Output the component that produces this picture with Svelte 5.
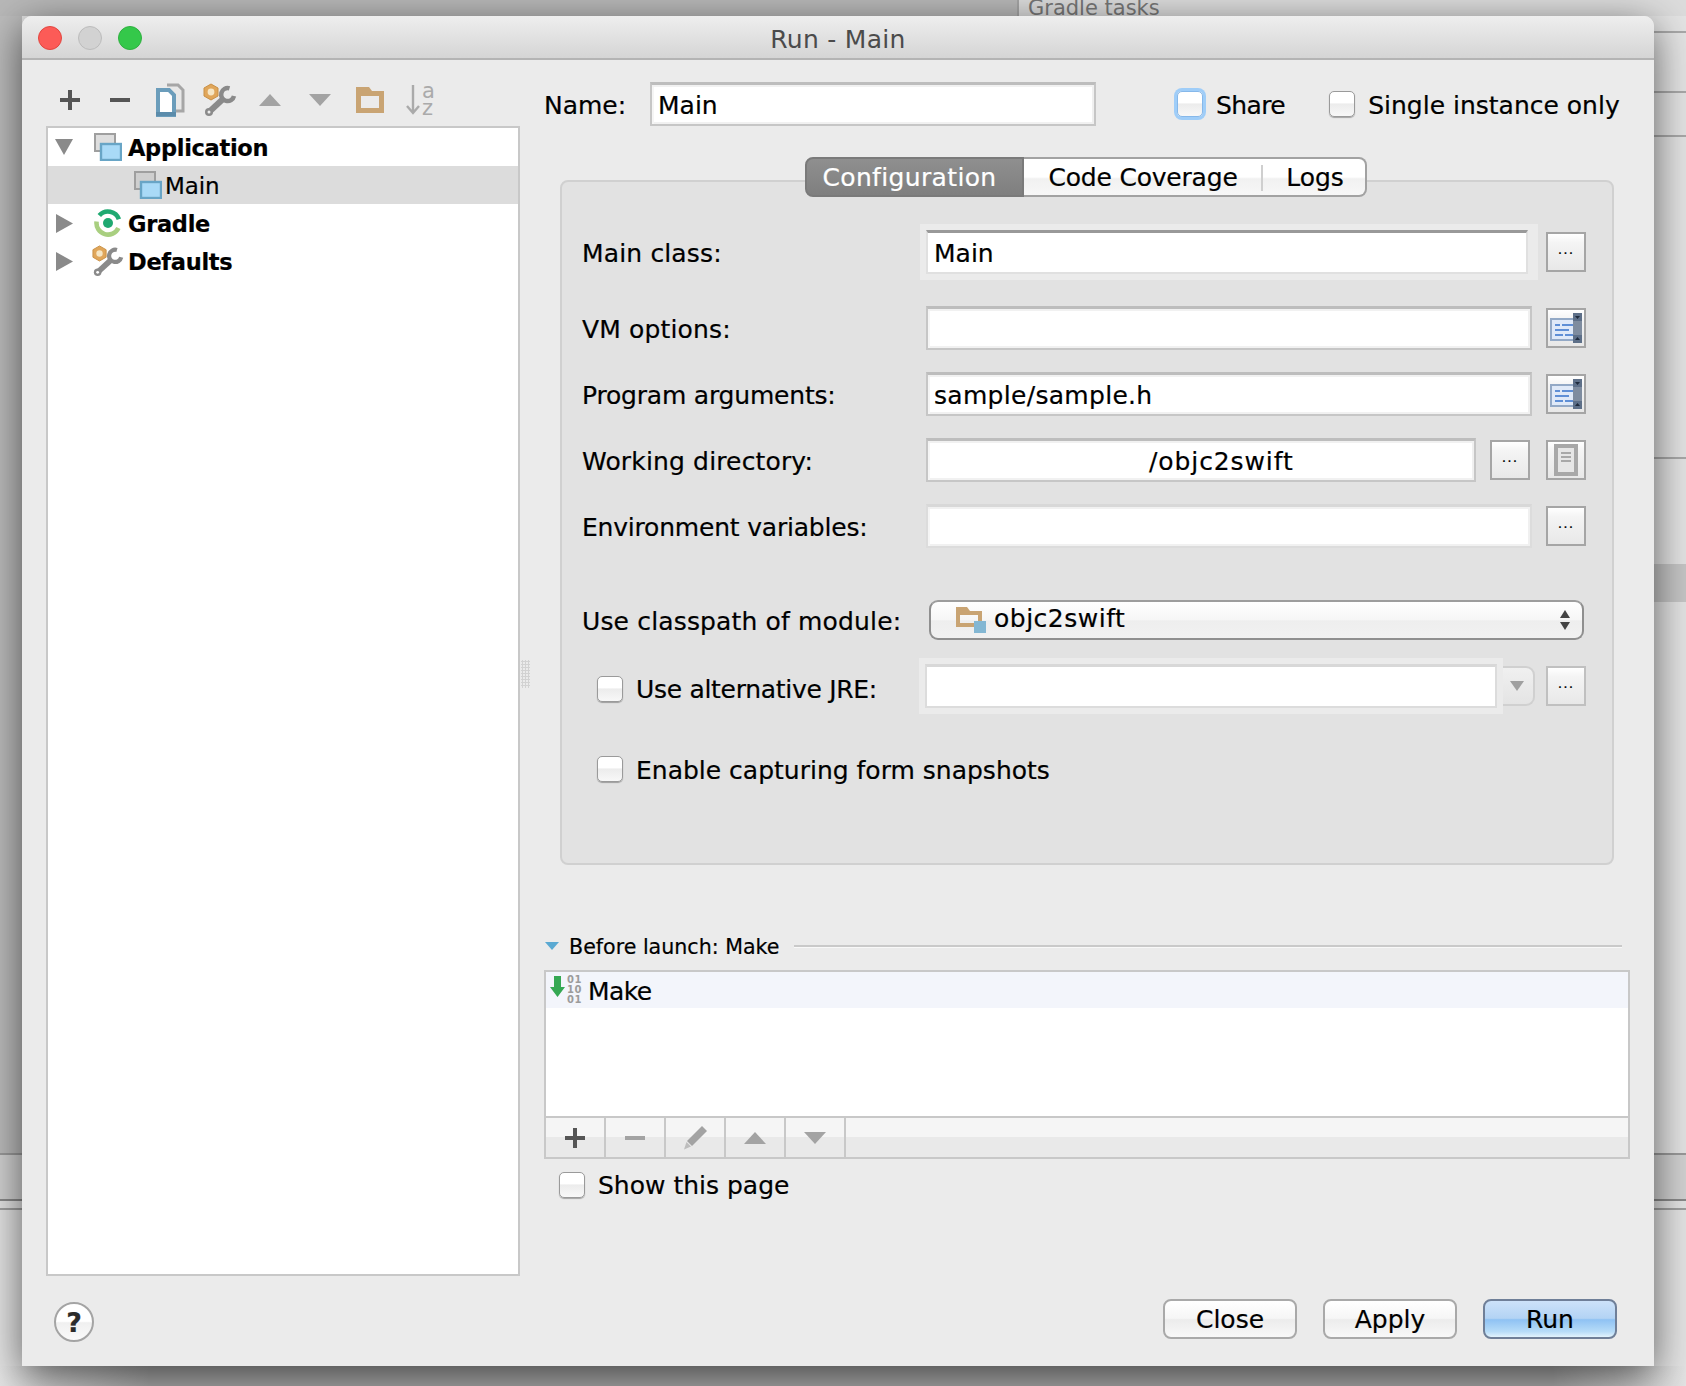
<script>
  const rows = [
    { label: 'VM options:', value: '', tight: false },
    { label: 'Program arguments:', value: 'sample/sample.h', tight: true }
  ];
  const listTools = ['plus', 'minus', 'pencil', 'up', 'down'];
</script>

<div class="desk">
  <div class="bg-top">
    <div class="bg-top-left"></div>
    <div class="bg-top-right"><span class="gradle-tasks">Gradle tasks</span></div>
  </div>

  <div class="window">
    <header class="titlebar">
      <div class="lights">
        <span class="light red"></span>
        <span class="light gray"></span>
        <span class="light green"></span>
      </div>
      <div class="title">Run - Main</div>
    </header>

    <div class="content">
      <aside class="left">
        <div class="toolbar">
          <span class="tool"><svg width="22" height="22" viewBox="0 0 22 22"><path d="M1 11h20M11 1v20" stroke="#555" stroke-width="4"/></svg></span>
          <span class="tool"><svg width="22" height="22" viewBox="0 0 22 22"><path d="M1 11h20" stroke="#555" stroke-width="4"/></svg></span>
          <span class="tool"><svg width="30" height="34" viewBox="0 0 30 34">
            <path d="M12 2h11l5 5v21h-8" fill="#e8e8e8" stroke="#a6a6a6" stroke-width="3"/>
            <path d="M3 7h11l5 5v20H3z" fill="#fff" stroke="#6b9dbb" stroke-width="4"/>
            <path d="M1 29h20v4H1z" fill="#5b8cab"/>
          </svg></span>
          <span class="tool"><svg width="34" height="34" viewBox="0 0 34 34">
            <path d="M8 1l7 4v8l-7 4-7-4V5z" fill="#e0a65a" stroke="#c99045" stroke-width="1"/>
            <circle cx="8" cy="9" r="3.400" fill="#f6e6c4"/>
            <path d="M26.500 5.300A6.500 6.500 0 1 0 31 13" fill="none" stroke="#8a8a8a" stroke-width="4.500"/>
            <path d="M20 16L6 29" stroke="#8a8a8a" stroke-width="6"/>
            <circle cx="6" cy="29" r="4" fill="#8a8a8a"/>
            <circle cx="6" cy="29" r="1.500" fill="#ececec"/>
          </svg></span>
          <span class="tool"><svg width="24" height="14" viewBox="0 0 24 14"><path d="M1 13L12 1l11 12z" fill="#a3a3a3"/></svg></span>
          <span class="tool"><svg width="24" height="14" viewBox="0 0 24 14"><path d="M1 1l11 12L23 1z" fill="#a3a3a3"/></svg></span>
          <span class="tool"><svg width="28" height="26" viewBox="0 0 28 26"><path d="M0 0h13l3 4h12v22H0zM5 9v12h18V9z" fill="#c9a473" fill-rule="evenodd"/></svg></span>
          <span class="tool"><svg class="sort" width="30" height="32" viewBox="0 0 30 32">
            <path d="M8 1v28M2 22l6 7 6-7" stroke="#aaa" stroke-width="2.400" fill="none"/>
            <text x="17" y="14" class="sort-letter">a</text>
            <text x="17" y="31" class="sort-letter">z</text>
          </svg></span>
        </div>

        <div class="tree">
          <div class="tree-row">
            <span class="twisty first"><svg width="18" height="16" viewBox="0 0 18 16"><path d="M0 0h18L9 16z" fill="#8a8a8a"/></svg></span>
            <svg class="appicon" width="28" height="28" viewBox="0 0 28 28">
              <rect x="1" y="1" width="20" height="17" fill="#dedede" stroke="#9f9f9f" stroke-width="2"/>
              <rect x="7" y="11" width="20" height="16" fill="#a9daf7" stroke="#68a5c6" stroke-width="2.400"/>
            </svg>
            <span class="tree-label strong">Application</span>
          </div>
          <div class="tree-row selected child">
            <svg class="appicon" width="28" height="28" viewBox="0 0 28 28">
              <rect x="1" y="1" width="20" height="17" fill="#cfcfcf" stroke="#9f9f9f" stroke-width="2"/>
              <rect x="7" y="11" width="20" height="16" fill="#a9daf7" stroke="#68a5c6" stroke-width="2.400"/>
            </svg>
            <span class="tree-label child-label">Main</span>
          </div>
          <div class="tree-row">
            <span class="twisty"><svg width="17" height="19" viewBox="0 0 17 19"><path d="M0 0l17 9.500-17 9.500z" fill="#8a8a8a"/></svg></span>
            <svg class="appicon" width="28" height="28" viewBox="0 0 28 28">
              <path d="M5.300 6.500A11.500 11.500 0 0 1 24.900 10.300" fill="none" stroke="#1fa971" stroke-width="4.600"/>
              <path d="M2.600 12.500A11.500 11.500 0 0 0 24.400 19" fill="none" stroke="#a9cf80" stroke-width="4.600"/>
              <circle cx="14" cy="14" r="5" fill="#1fa971"/>
            </svg>
            <span class="tree-label strong">Gradle</span>
          </div>
          <div class="tree-row">
            <span class="twisty"><svg width="17" height="19" viewBox="0 0 17 19"><path d="M0 0l17 9.500-17 9.500z" fill="#8a8a8a"/></svg></span>
            <svg class="appicon wrench" width="32" height="32" viewBox="0 0 34 34">
              <path d="M8 1l7 4v8l-7 4-7-4V5z" fill="#e0a65a" stroke="#c99045" stroke-width="1"/>
              <circle cx="8" cy="9" r="3.400" fill="#f6e6c4"/>
              <path d="M26.500 5.300A6.500 6.500 0 1 0 31 13" fill="none" stroke="#8a8a8a" stroke-width="4.500"/>
              <path d="M20 16L6 29" stroke="#8a8a8a" stroke-width="6"/>
              <circle cx="6" cy="29" r="4" fill="#8a8a8a"/>
              <circle cx="6" cy="29" r="1.500" fill="#fff"/>
            </svg>
            <span class="tree-label strong">Defaults</span>
          </div>
        </div>

        <div class="help-wrap"><span class="help">?</span></div>
      </aside>

      <div class="splitter"><span class="grip"></span></div>

      <main class="right">
        <div class="name-row">
          <span class="name-label">Name:</span>
          <div class="input name-input">Main</div>
          <span class="check focused share"></span>
          <span class="check-label share-label">Share</span>
          <span class="check single"></span>
          <span class="check-label">Single instance only</span>
        </div>

        <div class="tabs">
          <span class="tab active">Configuration</span>
          <span class="tab code">Code Coverage</span>
          <span class="tab logs">Logs</span>
        </div>

        <section class="panel">
          <div class="row main-row">
            <span class="lbl">Main class:</span>
            <div class="input focus-field">Main</div>
            <span class="btn-dots">...</span>
          </div>

          {#each rows as r}
            <div class="row">
              <span class="lbl" class:tight={r.tight}>{r.label}</span>
              <div class="input spaced">{r.value}</div>
              <span class="btn-dots">
                <svg width="34" height="34" viewBox="0 0 34 34">
                  <rect x="2" y="8" width="24" height="21" fill="#dfe9f8" stroke="#93a9c6" stroke-width="2"/>
                  <path d="M6 14h5M13 14h11M6 19h14M6 24h8M16 24h8" stroke="#5f8fd6" stroke-width="2"/>
                  <rect x="24" y="2" width="9" height="30" fill="#5d6f88"/>
                  <rect x="24" y="10" width="9" height="14" fill="#7e8c9f"/>
                  <path d="M26 5h5l-2.500 3zM26 29h5l-2.500-3z" fill="#1f2b3d"/>
                </svg>
              </span>
            </div>
          {/each}

          <div class="row">
            <span class="lbl">Working directory:</span>
            <div class="input wd">/objc2swift</div>
            <span class="btn-dots wd-btn">...</span>
            <span class="btn-dots">
              <svg width="24" height="32" viewBox="0 0 24 32">
                <rect x="2" y="2" width="20" height="28" fill="#e6e6e6" stroke="#a8a8a8" stroke-width="4"/>
                <path d="M7 9h10M7 13h10M7 17h10" stroke="#a8a8a8" stroke-width="2"/>
              </svg>
            </span>
          </div>

          <div class="row">
            <span class="lbl tight">Environment variables:</span>
            <div class="input soft"></div>
            <span class="btn-dots">...</span>
          </div>

          <div class="row select-row">
            <span class="lbl">Use classpath of module:</span>
            <div class="select">
              <svg width="30" height="26" viewBox="0 0 30 26">
                <path d="M0 0h11l3 4h12v16H0zM4 8v8h18V8z" fill="#c9a473" fill-rule="evenodd"/>
                <rect x="18" y="14" width="12" height="12" fill="#83b7d3"/>
              </svg>
              <span class="select-text">objc2swift</span>
              <svg class="updown" width="12" height="24" viewBox="0 0 12 24"><path d="M1 10L6 2l5 8zM1 14l5 8 5-8z" fill="#444"/></svg>
            </div>
          </div>

          <div class="row jre-row">
            <span class="check indent low"></span>
            <span class="lbl jre-label low">Use alternative JRE:</span>
            <div class="combo">
              <div class="input soft combo-input"></div>
              <span class="combo-arrow"><svg width="14" height="10" viewBox="0 0 14 10"><path d="M0 0h14L7 10z" fill="#a0a0a0"/></svg></span>
            </div>
            <span class="btn-dots light-btn">...</span>
          </div>

          <div class="row snap-row">
            <span class="check indent"></span>
            <span class="lbl snap-label">Enable capturing form snapshots</span>
          </div>
        </section>

        <div class="before">
          <svg width="14" height="8" viewBox="0 0 14 8"><path d="M0 0h14L7 8z" fill="#5aa9d2"/></svg>
          <span class="before-text">Before launch: Make</span>
          <span class="before-line"></span>
        </div>

        <div class="list">
          <div class="list-row">
            <svg width="34" height="30" viewBox="0 0 34 30">
              <path d="M4 1h7v11h4l-7.500 10-7.500-10h4z" fill="#35a853"/>
              <text x="17" y="8" class="bits">01</text>
              <text x="17" y="18" class="bits">10</text>
              <text x="17" y="28" class="bits">01</text>
            </svg>
            <span class="make">Make</span>
          </div>
          <div class="list-space"></div>
          <div class="list-tools">
            {#each listTools as t}
              <span class="list-tool">
                {#if t === 'plus'}
                  <svg width="22" height="22" viewBox="0 0 22 22"><path d="M1 11h20M11 1v20" stroke="#555" stroke-width="4"/></svg>
                {:else if t === 'minus'}
                  <svg width="22" height="22" viewBox="0 0 22 22"><path d="M1 11h20" stroke="#a3a3a3" stroke-width="4"/></svg>
                {:else if t === 'pencil'}
                  <svg width="26" height="26" viewBox="0 0 26 26"><path d="M20 1l5 5L10 21l-5-5z" fill="#a3a3a3"/><path d="M4.500 17l4.500 4.500-7 3z" fill="#bdbdbd"/></svg>
                {:else if t === 'up'}
                  <svg width="24" height="14" viewBox="0 0 24 14"><path d="M1 13L12 1l11 12z" fill="#a3a3a3"/></svg>
                {:else}
                  <svg width="24" height="14" viewBox="0 0 24 14"><path d="M1 1l11 12L23 1z" fill="#a3a3a3"/></svg>
                {/if}
              </span>
            {/each}
          </div>
        </div>

        <div class="show-row">
          <span class="check"></span>
          <span class="check-label show-label">Show this page</span>
        </div>

        <div class="actions">
          <span class="btn">Close</span>
          <span class="btn">Apply</span>
          <span class="btn primary">Run</span>
        </div>
      </main>
    </div>
  </div>
</div>

<style>
  :global(body) { margin: 0; background: #e4e4e4; }

  .desk {
    position: relative;
    width: 1686px;
    height: 1386px;
    overflow: hidden;
    font-family: "DejaVu Sans", "Liberation Sans", sans-serif;
    font-size: 25px;
    color: #000;
    -webkit-text-stroke: 0.2px currentColor;
    background:
      linear-gradient(90deg, #e4e4e4, #aaaaaa 9%, #aaaaaa 92%, #e4e4e4) 0 1366px / 100% 20px no-repeat,
      linear-gradient(#a9a9a9, #a9a9a9) 1654px 31px / 32px 2px no-repeat,
      linear-gradient(#a9a9a9, #a9a9a9) 1654px 91px / 32px 2px no-repeat,
      linear-gradient(#a9a9a9, #a9a9a9) 1654px 135px / 32px 2px no-repeat,
      linear-gradient(#a9a9a9, #a9a9a9) 1654px 457px / 32px 2px no-repeat,
      linear-gradient(#c6c6c6, #c6c6c6) 1654px 564px / 32px 38px no-repeat,
      linear-gradient(#9a9a9a, #9a9a9a) 0 1153px / 100% 2px no-repeat,
      linear-gradient(#8a8a8a, #8a8a8a) 0 1199px / 100% 2px no-repeat,
      linear-gradient(#a0a0a0, #a0a0a0) 0 1208px / 100% 2px no-repeat,
      linear-gradient(#d2d2d2, #d2d2d2) 0 1155px / 100% 44px no-repeat,
      linear-gradient(#bcbcbc, #bcbcbc) 0 0 / 22px 1153px no-repeat,
      #e4e4e4;
  }

  .bg-top { display: flex; height: 16px; }
  .bg-top-left { width: 1017px; background: #b8b8b8; border-right: 2px solid #a5a5a5; }
  .bg-top-right { flex: 1; background: #dcdcdc; padding-left: 9px; overflow: hidden; }
  .gradle-tasks { display: block; margin-top: -5px; font-size: 21px; line-height: 26px; color: #777; -webkit-text-stroke: 0; }

  .window {
    position: absolute;
    left: 22px;
    top: 16px;
    width: 1632px;
    height: 1350px;
    background: #ebebeb;
    border-radius: 10px 10px 0 0;
    box-shadow: 0 10px 40px rgba(0, 0, 0, 0.6);
    display: flex;
    flex-direction: column;
  }

  .titlebar {
    height: 42px;
    flex: none;
    display: flex;
    align-items: center;
    position: relative;
    background: linear-gradient(#eeeeee, #d5d5d5);
    border-bottom: 2px solid #b4b4b4;
    border-radius: 10px 10px 0 0;
  }
  .lights { display: flex; gap: 16px; padding-left: 16px; padding-top: 2px; }
  .light { width: 24px; height: 24px; border-radius: 50%; box-sizing: border-box; }
  .red { background: #fc5b57; border: 1px solid #e2463f; }
  .gray { background: #d2d2d2; border: 1px solid #bcbcbc; }
  .green { background: #34c84a; border: 1px solid #2eb03f; }
  .title {
    position: absolute;
    left: 0; right: 0;
    margin-top: 5px;
    text-align: center;
    font-size: 25px;
    letter-spacing: 0.3px;
    color: #4b4b4b;
    -webkit-text-stroke: 0;
  }

  .content { flex: 1; display: flex; min-height: 0; }

  .left {
    width: 499px;
    flex: none;
    display: flex;
    flex-direction: column;
    box-sizing: border-box;
    padding-left: 24px;
  }
  .toolbar {
    height: 66px;
    display: flex;
    align-items: center;
    flex: none;
    padding-top: 14px;
    box-sizing: border-box;
    margin-left: -1px;
  }
  .tool { width: 50px; display: flex; justify-content: center; flex: none; }
  .sort { overflow: visible; }
  .sort-letter { font-size: 21px; fill: #aaa; stroke: none; -webkit-text-stroke: 0; font-family: "DejaVu Sans", sans-serif; }

  .tree {
    width: 474px;
    height: 1150px;
    flex: none;
    box-sizing: border-box;
    border: 2px solid #c8c8c8;
    background: #fff;
  }
  .tree-row {
    height: 38px;
    display: flex;
    align-items: center;
    position: relative;
  }
  .tree-row.selected { background: #dcdcdc; }
  .twisty { width: 46px; display: flex; padding-left: 8px; box-sizing: border-box; flex: none; }
  .twisty.first { padding-left: 7px; }
  .child { padding-left: 86px; }
  .tree-label { margin: 2px 0 0 6px; }
  .child-label { margin-left: 3px; font-size: 23px; letter-spacing: -0.1px; }
  .strong { font-weight: 700; font-size: 22.5px; letter-spacing: -0.3px; }
  .wrench { margin-left: -2px; margin-right: -2px; }

  .help-wrap { padding: 26px 0 0 8px; }
  .help {
    display: flex;
    align-items: center;
    justify-content: center;
    width: 40px;
    height: 40px;
    box-sizing: border-box;
    border-radius: 50%;
    border: 2px solid #a4a4a4;
    background: linear-gradient(#ffffff 0 48%, #f0f0f0 52%, #fafafa);
    font-weight: 700;
    font-size: 27px;
    color: #2b2b2b;
  }

  .splitter {
    width: 24px;
    flex: none;
    padding-top: 600px;
    box-sizing: border-box;
  }
  .grip {
    display: block;
    width: 9px;
    height: 28px;
    background: radial-gradient(circle, #d2d2d2 1px, transparent 1.300px) 0 0 / 3px 3px;
  }

  .right { flex: 1; min-width: 0; display: flex; flex-direction: column; }

  .name-row {
    height: 44px;
    margin-top: 22px;
    display: flex;
    align-items: center;
    flex: none;
  }
  .name-label { width: 106px; margin: 2px 0 0 -1px; flex: none; }
  .name-input { width: 446px; flex: none; }
  .share { margin-left: 81px; }
  .single { margin-left: 44px; }
  .check-label { margin: 2px 0 0 13px; white-space: nowrap; }
  .share-label { letter-spacing: -0.6px; }

  .input {
    height: 44px;
    box-sizing: border-box;
    border: 2px solid #c6c6c6;
    border-top: 3px solid #bdbdbd;
    background: #fff;
    box-shadow: inset 0 2px 0 #f1f1f1, inset 2px 0 0 #f5f5f5, inset -2px 0 0 #f0f0f0, inset 0 -2px 0 #f1f1f1;
    padding: 0 6px;
    line-height: 41px;
    white-space: nowrap;
  }

  .check {
    width: 26px;
    height: 26px;
    flex: none;
    box-sizing: border-box;
    border: 1px solid #9a9a9a;
    border-radius: 5px;
    background: linear-gradient(#ffffff 0 45%, #ececec 50%, #f8f8f8);
    box-shadow: 0 1px 1px rgba(0,0,0,0.3);
  }
  .check.focused {
    box-shadow: 0 0 0 3px #9fcdf8;
    border-color: #86b8ea;
  }

  .tabs {
    display: flex;
    height: 40px;
    margin: 31px 0 -17px 260px;
    flex: none;
    position: relative;
    z-index: 1;
    width: 562px;
    box-sizing: border-box;
  }
  .tab {
    display: flex;
    align-items: center;
    justify-content: center;
    box-sizing: border-box;
    border: 2px solid #a2a2a2;
    border-left: none;
    background: linear-gradient(#ffffff 0 50%, #f1f1f1 55%, #f7f7f7);
  }
  .active {
    width: 219px;
    padding-right: 10px;
    color: #fff;
    letter-spacing: 0.35px;
    border: 2px solid #7a7a7a;
    border-radius: 8px 0 0 8px;
    background: linear-gradient(#8f8f8f, #7f7f7f);
  }
  .code { width: 238px; position: relative; letter-spacing: -0.2px; border-right: none; }
  .code::after {
    content: "";
    position: absolute;
    right: -1px;
    top: 6px;
    bottom: 4px;
    width: 2px;
    background: #cfcfcf;
  }
  .logs { flex: 1; border-radius: 0 8px 8px 0; padding-left: 3px; }

  .panel {
    margin-left: 15px;
    width: 1054px;
    height: 685px;
    flex: none;
    box-sizing: border-box;
    background: #e2e2e2;
    border: 2px solid #d0d0d0;
    border-radius: 8px;
    padding: 48px 26px 0 20px;
  }

  .row {
    height: 44px;
    display: flex;
    align-items: center;
    margin-top: 22px;
  }
  .main-row { margin-top: 0; margin-bottom: 32px; }
  .lbl { width: 344px; flex: none; white-space: nowrap; margin-top: 2px; letter-spacing: 0.15px; }
  .lbl.tight { letter-spacing: -0.2px; }
  .row .input { flex: 1; min-width: 0; }
  .spaced { letter-spacing: 0.3px; }
  .btn-dots {
    width: 40px;
    height: 40px;
    flex: none;
    margin-left: 14px;
    box-sizing: border-box;
    border: 2px solid #a5a5a5;
    background: linear-gradient(#ffffff, #f4f4f4 25%, #e8e8e8);
    display: flex;
    align-items: center;
    justify-content: center;
    font-size: 14px;
    letter-spacing: 1px;
    line-height: 1;
    padding-bottom: 6px;
    overflow: hidden;
  }
  .btn-dots svg { margin-bottom: -6px; }

  .focus-field {
    margin-right: 4px;
    border-color: #e0e0e0;
    border-top-color: #999;
    box-shadow: 0 0 0 6px #ebebeb, 4px 0 0 6px #ebebeb;
  }
  .wd { padding-left: 221px; letter-spacing: 0.9px; }
  .wd-btn { margin-right: 2px; }
  .soft {
    border-color: #dcdcdc;
    border-top-color: #d8d8d8;
  }

  .select-row { margin-top: 52px; height: 40px; }
  .select {
    flex: 1;
    height: 40px;
    margin: 0 2px 0 3px;
    box-sizing: border-box;
    border: 2px solid #8f8f8f;
    border-top-color: #9d9d9d;
    border-radius: 9px;
    background: linear-gradient(#ffffff, #f6f6f6 50%, #eeeeee 52%, #f1f1f1);
    display: flex;
    align-items: center;
    padding-left: 25px;
    padding-right: 11px;
  }
  .select-text { margin-left: 8px; flex: 1; margin-top: -3px; letter-spacing: 0.5px; }

  .jre-row { margin-top: 24px; }
  .indent { margin-left: 15px; }
  .low { margin-top: 6px; }
  .jre-label { width: 289px; margin-left: 13px; letter-spacing: -0.3px; }
  .snap-label { margin-left: 13px; width: auto; letter-spacing: 0; }
  .combo { flex: 1; min-width: 0; display: flex; align-items: center; }
  .combo-input {
    box-shadow: 0 0 0 6px #ebebeb;
    position: relative;
    z-index: 1;
  }
  .combo-arrow {
    width: 38px;
    height: 40px;
    flex: none;
    box-sizing: border-box;
    border: 2px solid #d0d0d0;
    border-left: none;
    border-radius: 0 9px 9px 0;
    background: linear-gradient(#f0f0f0, #e4e4e4);
    display: flex;
    align-items: center;
    justify-content: center;
    padding-left: 4px;
  }
  .light-btn { margin-left: 11px; border-color: #c0c0c0; }
  .snap-row { margin-top: 48px; height: 26px; }

  .before {
    display: flex;
    align-items: center;
    flex: none;
    margin-top: 69px;
    height: 24px;
    font-size: 20.6px;
  }
  .before-text { margin: 2px 0 0 10px; }
  .before-line {
    width: 828px;
    height: 2px;
    margin-left: 15px;
    background: #c9c9c9;
    box-shadow: 0 1px 0 #f8f8f8;
  }

  .list {
    width: 1086px;
    height: 189px;
    flex: none;
    margin-top: 12px;
    box-sizing: border-box;
    border: 2px solid #c8c8c8;
    background: #fff;
    display: flex;
    flex-direction: column;
    margin-left: -1px;
  }
  .list-row {
    height: 36px;
    flex: none;
    background: #f3f5fb;
    display: flex;
    align-items: center;
    padding-left: 4px;
    gap: 4px;
  }
  .make { letter-spacing: -0.6px; margin-top: 2px; }
  .bits { font-size: 10px; font-weight: 700; fill: #9c9c9c; stroke: none; -webkit-text-stroke: 0; letter-spacing: 0.5px; font-family: "DejaVu Sans", sans-serif; }
  .list-space { flex: 1; }
  .list-tools {
    height: 41px;
    flex: none;
    display: flex;
    box-sizing: border-box;
    border-top: 2px solid #c8c8c8;
    background: linear-gradient(#f5f5f5 0 48%, #e9e9e9 48%);
  }
  .list-tool {
    width: 60px;
    flex: none;
    box-sizing: border-box;
    border-right: 2px solid #c8c8c8;
    display: flex;
    align-items: center;
    justify-content: center;
  }

  .show-row {
    display: flex;
    align-items: center;
    height: 26px;
    margin: 13px 0 0 14px;
    flex: none;
  }
  .show-label { margin-left: 13px; margin-top: 0; }

  .actions {
    display: flex;
    flex: none;
    margin: 101px 0 0 618px;
    gap: 26px;
  }
  .btn {
    width: 134px;
    height: 40px;
    box-sizing: border-box;
    border: 2px solid #a9a9a9;
    border-radius: 8px;
    background: linear-gradient(#ffffff, #f6f6f6 48%, #ececec 52%, #f8f8f8);
    display: flex;
    align-items: center;
    justify-content: center;
  }
  .primary {
    border-color: #6f7f98;
    background: linear-gradient(#cde2f9, #b3d3f4 48%, #8fc2f3 52%, #b7dcf8 85%, #e2f3fd);
  }
</style>
